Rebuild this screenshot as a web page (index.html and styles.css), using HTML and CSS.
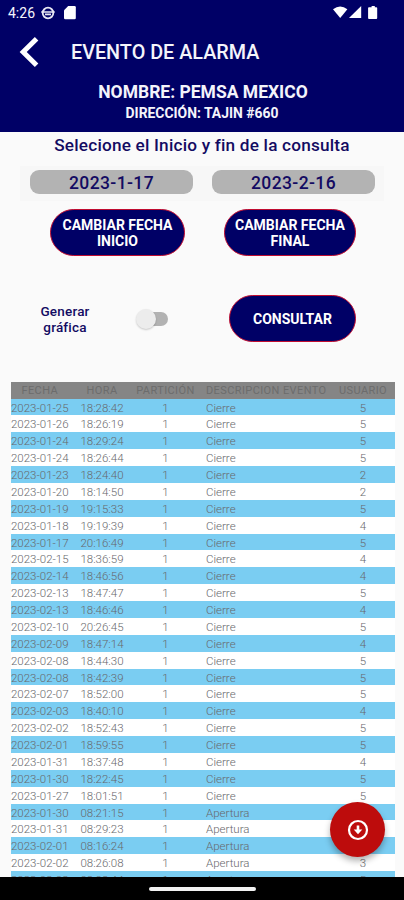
FILE: index.html
```
<!doctype html>
<html lang="es">
    <head>
        <meta charset="UTF-8" />
        <meta name="viewport" content="width=device-width, initial-scale=1.0" />
        <title>Evento de alarma</title>
        <link rel="stylesheet" href="styles.css">
    </head>
    <body>
        <div class="header">
            <div class="status-bar">
                <span class="clock">4:26</span>
                <svg class="icon-face" width="14" height="14" viewBox="0 0 14 14">
                    <circle cx="7" cy="7" r="5.3" fill="none" stroke="#e8e8f4" stroke-width="1.8" />
                    <path d="M0.3 6h13.4M4 8.4h6" stroke="#e8e8f4" stroke-width="1.6" />
                </svg>
                <svg class="icon-sd" width="12" height="14" viewBox="0 0 12 14">
                    <path d="M4.2 0H10.5Q11.8 0 11.8 1.3V12Q11.8 13.3 10.5 13.3H1.3Q0 13.3 0 12V4.2z" fill="#fff" />
                </svg>
                <svg class="icon-signal" width="45" height="14" viewBox="0 0 45 14">
                    <path d="M0 3.2Q7.2-2.4 14.4 3.2L7.2 12z" fill="#fff" />
                    <path d="M28.2 0V12H16z" fill="#fff" />
                    <path d="M37 1.2h1.6V0h3.2v1.2h1.5q.9 0 .9.9v10q0 .9-.9.9H36q-.9 0-.9-.9v-10q0-.9.9-.9z" fill="#fff" />
                </svg>
            </div>
            <div class="title-bar">
                <svg width="20" height="30" viewBox="0 0 20 30">
                    <path d="M17.6 1.8L4.2 15L17.6 28.2" fill="none" stroke="#fff" stroke-width="5" />
                </svg>
                <h1>EVENTO DE ALARMA</h1>
            </div>
            <div class="client-name">NOMBRE: PEMSA MEXICO</div>
            <div class="client-address">DIRECCIÓN: TAJIN #660</div>
        </div>

        <div class="content">
            <div class="hint">Selecione el Inicio y fin de la consulta</div>
            <div class="dates">
                <div class="date">2023-1-17</div>
                <div class="date">2023-2-16</div>
            </div>
            <div class="date-buttons">
                <button class="btn btn-start">CAMBIAR FECHA<br />INICIO</button>
                <button class="btn btn-end">CAMBIAR FECHA<br />FINAL</button>
            </div>
            <div class="query">
                <div class="chart-label">Generar<br />gráfica</div>
                <div class="switch"><div class="thumb"></div></div>
                <button class="btn btn-query">CONSULTAR</button>
            </div>

            <div class="events">
                <div class="row head"><span>FECHA</span><span>HORA</span><span>PARTICIÓN</span><span>DESCRIPCION EVENTO</span><span>USUARIO</span></div>
                <div class="row"><span>2023-01-25</span><span>18:28:42</span><span>1</span><span>Cierre</span><span>5</span></div>
                <div class="row"><span>2023-01-26</span><span>18:26:19</span><span>1</span><span>Cierre</span><span>5</span></div>
                <div class="row"><span>2023-01-24</span><span>18:29:24</span><span>1</span><span>Cierre</span><span>5</span></div>
                <div class="row"><span>2023-01-24</span><span>18:26:44</span><span>1</span><span>Cierre</span><span>5</span></div>
                <div class="row"><span>2023-01-23</span><span>18:24:40</span><span>1</span><span>Cierre</span><span>2</span></div>
                <div class="row"><span>2023-01-20</span><span>18:14:50</span><span>1</span><span>Cierre</span><span>2</span></div>
                <div class="row"><span>2023-01-19</span><span>19:15:33</span><span>1</span><span>Cierre</span><span>5</span></div>
                <div class="row"><span>2023-01-18</span><span>19:19:39</span><span>1</span><span>Cierre</span><span>4</span></div>
                <div class="row"><span>2023-01-17</span><span>20:16:49</span><span>1</span><span>Cierre</span><span>5</span></div>
                <div class="row"><span>2023-02-15</span><span>18:36:59</span><span>1</span><span>Cierre</span><span>4</span></div>
                <div class="row"><span>2023-02-14</span><span>18:46:56</span><span>1</span><span>Cierre</span><span>4</span></div>
                <div class="row"><span>2023-02-13</span><span>18:47:47</span><span>1</span><span>Cierre</span><span>5</span></div>
                <div class="row"><span>2023-02-13</span><span>18:46:46</span><span>1</span><span>Cierre</span><span>4</span></div>
                <div class="row"><span>2023-02-10</span><span>20:26:45</span><span>1</span><span>Cierre</span><span>5</span></div>
                <div class="row"><span>2023-02-09</span><span>18:47:14</span><span>1</span><span>Cierre</span><span>4</span></div>
                <div class="row"><span>2023-02-08</span><span>18:44:30</span><span>1</span><span>Cierre</span><span>5</span></div>
                <div class="row"><span>2023-02-08</span><span>18:42:39</span><span>1</span><span>Cierre</span><span>5</span></div>
                <div class="row"><span>2023-02-07</span><span>18:52:00</span><span>1</span><span>Cierre</span><span>5</span></div>
                <div class="row"><span>2023-02-03</span><span>18:40:10</span><span>1</span><span>Cierre</span><span>4</span></div>
                <div class="row"><span>2023-02-02</span><span>18:52:43</span><span>1</span><span>Cierre</span><span>5</span></div>
                <div class="row"><span>2023-02-01</span><span>18:59:55</span><span>1</span><span>Cierre</span><span>5</span></div>
                <div class="row"><span>2023-01-31</span><span>18:37:48</span><span>1</span><span>Cierre</span><span>4</span></div>
                <div class="row"><span>2023-01-30</span><span>18:22:45</span><span>1</span><span>Cierre</span><span>5</span></div>
                <div class="row"><span>2023-01-27</span><span>18:01:51</span><span>1</span><span>Cierre</span><span>5</span></div>
                <div class="row"><span>2023-01-30</span><span>08:21:15</span><span>1</span><span>Apertura</span><span></span></div>
                <div class="row"><span>2023-01-31</span><span>08:29:23</span><span>1</span><span>Apertura</span><span></span></div>
                <div class="row"><span>2023-02-01</span><span>08:16:24</span><span>1</span><span>Apertura</span><span></span></div>
                <div class="row"><span>2023-02-02</span><span>08:26:08</span><span>1</span><span>Apertura</span><span>3</span></div>
                <div class="row"><span>2023-02-03</span><span>08:08:44</span><span>1</span><span>Apertura</span><span>5</span></div>
            </div>
        </div>

        <button class="fab" aria-label="Descargar">
            <svg width="22" height="22" viewBox="0 0 22 22">
                <circle cx="11" cy="11" r="9" fill="none" stroke="#fff" stroke-width="2.2" />
                <path d="M9.7 6.5h2.6v4h3L11 15.2L6.7 10.5h3z" fill="#fff" />
            </svg>
        </button>
        <div class="nav-bar"><div class="nav-handle"></div></div>
    </body>
</html>
```
FILE: styles.css
```
body {
    font-family: Roboto, sans-serif;
    display: flex;
    flex-direction: column;
    width: 404px;
    height: 900px;
    margin: 0;
    position: relative;
    background-color: #fafafa;
    color: #130b62;
    overflow: hidden;
}
.header {
    height: 132px;
    flex-shrink: 0;
    background-color: #000066;
    color: #f4f4fb;
    text-align: center;
    white-space: nowrap;
}
.status-bar {
    display: flex;
    align-items: center;
    height: 26px;
    padding: 0 26px 0 8px;
}
.clock {
    width: 33px;
    text-align: left;
    font-size: 14px;
}
.icon-sd {
    margin-left: 9px;
}
.icon-signal {
    margin-left: auto;
}
.title-bar {
    display: flex;
    align-items: center;
    height: 52px;
    padding-left: 19px;
}
h1 {
    margin: 1px 0 0 32px;
    font-size: 19.8px;
    font-weight: 500;
}
.client-name {
    margin-top: 3px;
    height: 22px;
    line-height: 22px;
    padding-left: 2px;
    font-size: 17.5px;
    font-weight: bold;
}
.client-address {
    height: 20px;
    line-height: 20px;
    font-size: 13.9px;
    font-weight: bold;
}
.content {
    flex: 1;
    min-height: 0;
    overflow: hidden;
}
.hint {
    height: 34px;
    line-height: 26px;
    text-align: center;
    white-space: nowrap;
    font-size: 17.2px;
    font-weight: 500;
    letter-spacing: 0.2px;
}
.dates {
    display: flex;
    gap: 19px;
    margin: 0 20px;
    padding: 4px 9px 7px 10px;
    background-color: #f7f7f7;
}
.date {
    flex: 1;
    height: 24px;
    line-height: 26px;
    border-radius: 9px;
    background-color: #b3b3b3;
    text-align: center;
    font-size: 17.5px;
    font-weight: 500;
    letter-spacing: 0.4px;
}
.date-buttons {
    display: flex;
    gap: 39px;
    padding: 8px 0 0 50px;
}
.btn {
    height: 47px;
    padding: 1px 0 0;
    border: 1px solid #c00c30;
    border-radius: 24px;
    background-color: #000066;
    color: #fff;
    font-family: inherit;
    font-size: 14px;
    font-weight: bold;
    line-height: 16px;
    white-space: nowrap;
}
.btn-start {
    width: 135px;
}
.btn-end {
    width: 132px;
}
.query {
    display: flex;
    align-items: center;
    height: 47px;
    padding: 39px 0 40px 39px;
}
.chart-label {
    width: 52px;
    text-align: center;
    font-size: 13.5px;
    font-weight: 500;
    line-height: 16px;
    letter-spacing: 0.2px;
}
.switch {
    width: 29px;
    height: 14px;
    margin-left: 48px;
    border-radius: 7px;
    background-color: #b2b2b2;
    display: flex;
    align-items: center;
}
.thumb {
    width: 20px;
    height: 20px;
    flex-shrink: 0;
    margin-left: -3px;
    border-radius: 50%;
    background-color: #ececec;
    box-shadow: 0 1px 2px rgba(0, 0, 0, 0.2);
}
.btn-query {
    width: 127px;
    margin-left: 61px;
}
.events {
    margin: 0 9px 0 10.5px;
    color: #68686c;
    font-size: 11.5px;
    font-weight: 300;
    background-color: #fff;
}
.row {
    display: grid;
    grid-template-columns: 58.5px 66px 61px 10px 125px 64px;
    height: 16.88px;
    line-height: 18px;
    text-align: center;
    white-space: nowrap;
}
.row:nth-child(even) {
    background-color: #7acdf2;
}
.row span:nth-child(4) {
    grid-column: 5;
    text-align: left;
}
.row.head {
    height: 16.5px;
    background-color: #858585;
    color: #6c6c6c;
    font-size: 11px;
    font-weight: 400;
    letter-spacing: 0.4px;
}
.fab {
    position: absolute;
    left: 330px;
    top: 802px;
    width: 55px;
    height: 55px;
    padding: 0;
    border: none;
    border-radius: 50%;
    background-color: #bd0c0c;
    box-shadow: 0 4px 6px rgba(0, 0, 0, 0.3);
    display: flex;
    align-items: center;
    justify-content: center;
}
.nav-bar {
    height: 23px;
    flex-shrink: 0;
    background-color: #000;
    display: flex;
    align-items: center;
    justify-content: center;
}
.nav-handle {
    width: 107px;
    height: 4px;
    border-radius: 2px;
    background-color: #f2f2f2;
}
```
